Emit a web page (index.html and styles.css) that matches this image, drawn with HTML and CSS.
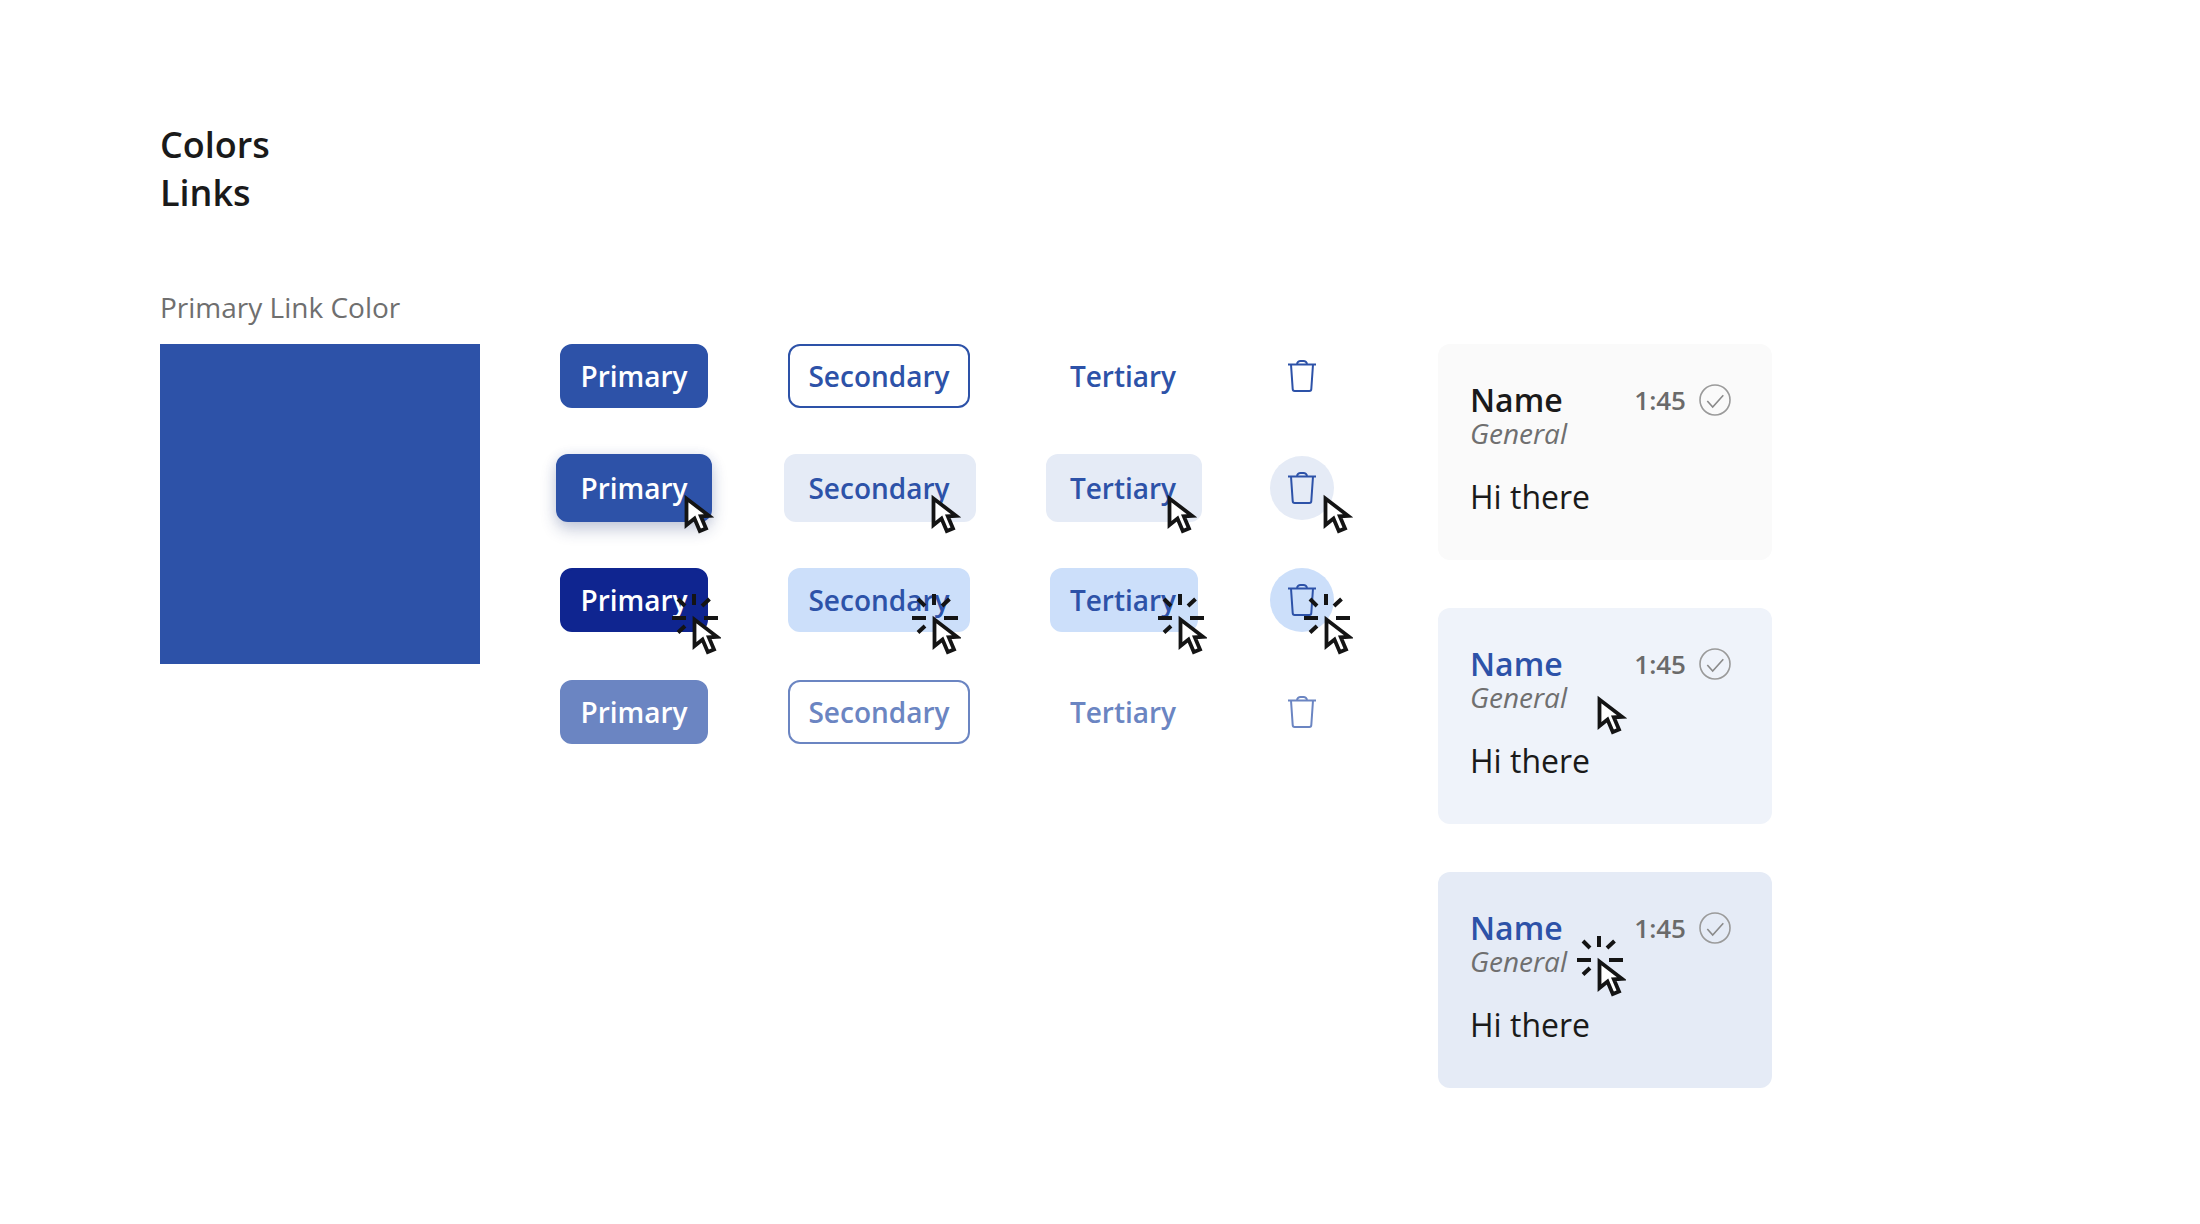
FILE: index.html
```html
<!DOCTYPE html>
<html>

<head>
    <meta charset="UTF-8">
    <title>Colors Links</title>
    <link rel="stylesheet" href="styles.css">
</head>

<body>
    <svg class="defs" width="0" height="0">
        <symbol id="arrow" viewBox="-3 -3 32 44">
            <path d="M1.5 2.5V29L9.5 22.5L14.8 35L21 32.4L15.8 20.3L24 19.8Z" fill="#fff" stroke="#141414" stroke-width="3.8" />
        </symbol>
        <symbol id="arrow-click" viewBox="-24 -26 52 66">
            <path d="M1.5 2.5V29L9.5 22.5L14.8 35L21 32.4L15.8 20.3L24 19.8Z" fill="#fff" stroke="#141414" stroke-width="3.8" />
            <path d="M-21 1H-7M11 1H25M1 -23V-12M-15 -18L-8 -11M9 -11L16.5 -18M-15 15.5L-8 9" fill="none" stroke="#141414" stroke-width="4" />
        </symbol>
        <symbol id="trash" viewBox="0 0 32 32">
            <path d="M2 4.5H30M11 4.5C11 2 13 1 14.5 1H17.5C19 1 21 2 21 4.5M5 4.5L6.7 29A2 2 0 0 0 8.7 31H23.3A2 2 0 0 0 25.3 29L27 4.5" fill="none" stroke="currentColor" stroke-width="2" />
        </symbol>
        <symbol id="check" viewBox="0 0 32 32">
            <circle cx="16" cy="16" r="15" fill="none" stroke="#9a9a9a" stroke-width="1.6" />
            <path d="M8.3 17L13.7 23L24.3 11.3" fill="none" stroke="#8a8a8a" stroke-width="1.6" />
        </symbol>
    </svg>

    <div class="page">
        <h1 class="title">Colors<br>Links</h1>

        <div class="board">
            <div class="swatch-label">Primary Link Color</div>
            <div class="swatch"></div>

            <div class="states">
                <button class="btn primary">Primary</button>
                <button class="btn secondary">Secondary</button>
                <button class="btn tertiary">Tertiary</button>
                <button class="icon-btn"><svg class="trash"><use href="#trash" /></svg></button>

                <button class="btn primary hover">Primary
                    <svg class="cursor c-primary-hover"><use href="#arrow" /></svg>
                </button>
                <button class="btn secondary hover">Secondary
                    <svg class="cursor c-secondary-hover"><use href="#arrow" /></svg>
                </button>
                <button class="btn tertiary hover">Tertiary
                    <svg class="cursor c-tertiary-hover"><use href="#arrow" /></svg>
                </button>
                <button class="icon-btn hover"><svg class="trash"><use href="#trash" /></svg>
                    <svg class="cursor c-icon-hover"><use href="#arrow" /></svg>
                </button>

                <button class="btn primary pressed">Primary
                    <svg class="cursor-click c-primary-pressed"><use href="#arrow-click" /></svg>
                </button>
                <button class="btn secondary pressed">Secondary
                    <svg class="cursor-click c-secondary-pressed"><use href="#arrow-click" /></svg>
                </button>
                <button class="btn tertiary pressed">Tertiary
                    <svg class="cursor-click c-tertiary-pressed"><use href="#arrow-click" /></svg>
                </button>
                <button class="icon-btn pressed"><svg class="trash"><use href="#trash" /></svg>
                    <svg class="cursor-click c-icon-pressed"><use href="#arrow-click" /></svg>
                </button>

                <button class="btn primary disabled">Primary</button>
                <button class="btn secondary disabled">Secondary</button>
                <button class="btn tertiary disabled">Tertiary</button>
                <button class="icon-btn disabled"><svg class="trash"><use href="#trash" /></svg></button>
            </div>

            <div class="cards">
                <div class="card">
                    <div class="card-head">
                        <div>
                            <div class="name">Name</div>
                            <div class="channel">General</div>
                        </div>
                        <div class="meta">
                            <span class="time">1:45</span>
                            <svg class="check"><use href="#check" /></svg>
                        </div>
                    </div>
                    <div class="message">Hi there</div>
                </div>

                <div class="card hover">
                    <div class="card-head">
                        <div>
                            <div class="name">Name</div>
                            <div class="channel">General</div>
                        </div>
                        <div class="meta">
                            <span class="time">1:45</span>
                            <svg class="check"><use href="#check" /></svg>
                        </div>
                    </div>
                    <div class="message">Hi there</div>
                    <svg class="cursor c-card-hover"><use href="#arrow" /></svg>
                </div>

                <div class="card pressed">
                    <div class="card-head">
                        <div>
                            <div class="name">Name</div>
                            <div class="channel">General</div>
                        </div>
                        <div class="meta">
                            <span class="time">1:45</span>
                            <svg class="check"><use href="#check" /></svg>
                        </div>
                    </div>
                    <div class="message">Hi there</div>
                    <svg class="cursor-click c-card-pressed"><use href="#arrow-click" /></svg>
                </div>
            </div>
        </div>
    </div>
</body>

</html>
```

FILE: styles.css
```css
body {
    margin: 0;
    background: #fff;
    font-family: "Open Sans", sans-serif;
    color: #1a1a1a;
}

.defs {
    position: absolute;
}

.page {
    padding: 121px 0 0 160px;
}

.title {
    margin: 0 0 71px;
    font-size: 36px;
    font-weight: 600;
    line-height: 48px;
}

.board {
    display: grid;
    grid-template-columns: 320px auto 334px;
    grid-template-rows: 56px auto;
    justify-content: start;
    column-gap: 80px;
}

.swatch-label {
    grid-column: 1 / 4;
    font-size: 28px;
    line-height: 38px;
    color: #6f6f6f;
}

.swatch {
    width: 320px;
    height: 320px;
    background: #2d52a8;
}

/* buttons */
.states {
    display: grid;
    grid-template-columns: 148px 182px 148px 64px;
    grid-auto-rows: 64px;
    gap: 48px 80px;
}

.btn {
    position: relative;
    padding: 0;
    border: 2px solid transparent;
    border-radius: 12px;
    background: none;
    font-family: inherit;
    font-size: 28px;
    font-weight: 600;
}

.btn.hover {
    margin: -2px -4px;
}

.primary {
    background: #2d52a8;
    border-color: #2d52a8;
    color: #fff;
}

.primary.hover {
    box-shadow: 0 8px 16px rgba(30, 50, 110, 0.24), 0 0 12px rgba(45, 82, 168, 0.1);
}

.primary.pressed {
    background: #0f2590;
    border-color: #0f2590;
}

.primary.disabled {
    background: #6b85c2;
    border-color: #6b85c2;
}

.secondary {
    border-color: #2d52a8;
    color: #2d52a8;
}

.secondary.hover {
    margin-right: -6px;
    padding-right: 2px;
}

.tertiary {
    padding-right: 2px;
    color: #2d52a8;
}

.secondary.hover,
.tertiary.hover {
    background: #e5ebf6;
    border-color: #e5ebf6;
}

.secondary.pressed,
.tertiary.pressed {
    background: #ccdffa;
    border-color: #ccdffa;
}

.secondary.disabled {
    border-color: #6b85c2;
    color: #6b85c2;
}

.tertiary.disabled {
    color: #6b85c2;
}

.icon-btn {
    position: relative;
    display: flex;
    align-items: center;
    justify-content: center;
    width: 64px;
    height: 64px;
    margin-left: -8px;
    padding: 0;
    border: 0;
    border-radius: 50%;
    background: none;
    color: #2d52a8;
}

.icon-btn.hover {
    background: #e5ebf6;
}

.icon-btn.pressed {
    background: #ccdffa;
}

.icon-btn.disabled {
    color: #6b85c2;
}

.trash {
    width: 32px;
    height: 32px;
}

/* cursors sit on top of the control they point at */
.cursor,
.cursor-click {
    position: absolute;
}

.cursor {
    width: 32px;
    height: 44px;
}

.cursor-click {
    width: 52px;
    height: 66px;
}

.c-primary-hover {
    left: 124px;
    top: 37px;
}

.c-secondary-hover {
    left: 143px;
    top: 37px;
}

.c-tertiary-hover {
    left: 117px;
    top: 37px;
}

.c-icon-hover {
    left: 51px;
    top: 37px;
}

.c-primary-pressed {
    left: 107px;
    top: 21px;
}

.c-secondary-pressed {
    left: 119px;
    top: 21px;
}

.c-tertiary-pressed {
    left: 103px;
    top: 21px;
}

.c-icon-pressed {
    left: 31px;
    top: 23px;
}

.c-card-hover {
    left: 157px;
    top: 86px;
}

.c-card-pressed {
    left: 136px;
    top: 61px;
}

/* message cards */
.cards {
    display: flex;
    flex-direction: column;
    gap: 48px;
    margin-left: 16px;
}

.card {
    position: relative;
    box-sizing: border-box;
    width: 334px;
    height: 216px;
    padding: 38px 41px 0 32px;
    border-radius: 12px;
    background: #fafafa;
}

.card.hover {
    background: #eff3fa;
}

.card.pressed {
    background: #e5ebf6;
}

.card-head {
    display: flex;
    justify-content: space-between;
}

.name {
    font-size: 32px;
    font-weight: 600;
    line-height: 36px;
}

.card.hover .name,
.card.pressed .name {
    color: #2d52a8;
}

.channel {
    font-size: 28px;
    font-style: italic;
    line-height: 30px;
    color: #6f6f6f;
}

.meta {
    display: flex;
    align-items: center;
    gap: 13px;
    height: 36px;
}

.time {
    font-size: 26px;
    font-weight: 600;
    color: #6a6a6a;
}

.check {
    width: 32px;
    height: 32px;
}

.message {
    margin-top: 27px;
    font-size: 32px;
    line-height: 44px;
}
```
